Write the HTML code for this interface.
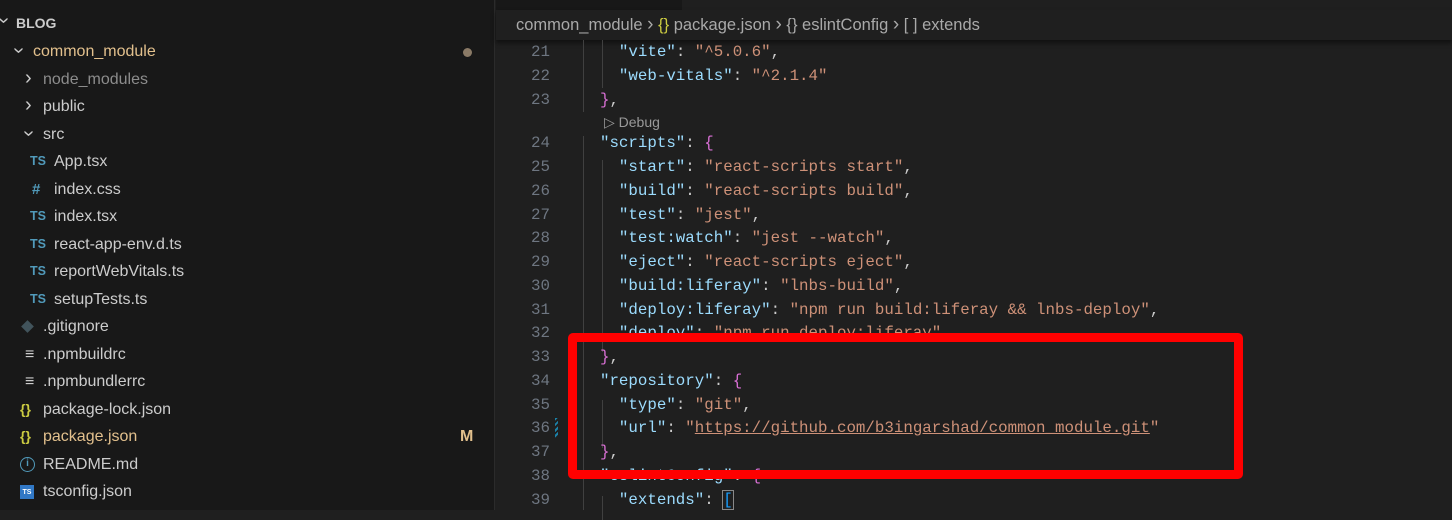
<!DOCTYPE html>
<html><head><meta charset="utf-8"><style>
*{margin:0;padding:0;box-sizing:border-box}
body{width:1452px;height:510px;background:#1f1f1f;overflow:hidden;position:relative;font-family:"Liberation Sans",sans-serif}
#side{position:absolute;left:0;top:0;width:495px;height:510px;background:#181818;border-right:1px solid #2b2b2b}
.r{position:absolute;left:0;height:27px;line-height:27px;font-size:16px;color:#cccccc;white-space:nowrap}
.r span{position:absolute}
.ch{font-size:20px;color:#ccc}
.ic{font-size:12.5px;font-weight:bold;color:#519aba}
#tabs{position:absolute;left:496px;top:0;width:956px;height:10px;background:#181818}
#tabs div{position:absolute;left:186px;top:0;right:0;height:10px;background:#1f1f1f}
#bc{position:absolute;left:496px;top:10px;width:956px;height:30px;line-height:30px;font-size:16.5px;color:#a9a9a9;padding-left:20px;box-shadow:0 3px 4px #111;white-space:pre}
#code{position:absolute;left:496px;top:40px;right:0;bottom:0;font-family:"Liberation Mono",monospace;font-size:15.8px}
.l{position:absolute;left:0;height:24px;line-height:24px;white-space:pre;color:#cccccc}
.n{position:absolute;width:54px;text-align:right;color:#6e7681}
.t{position:absolute;left:85px}
.k{color:#9cdcfe}.s{color:#ce9178}.p{color:#da70d6}.b{color:#179fff}
.g{position:absolute;width:1px;background:#404040}
</style></head><body>
<div id="side">
<div class="r" style="top:10px;font-weight:bold;font-size:14px"><span class="ch" style="left:0;top:-3px;font-weight:normal;transform:rotate(90deg)">&#8250;</span><span style="left:16px">BLOG</span></div>
<div class="r" style="top:38px;color:#e2c08d"><span class="ch" style="left:15px;top:-1px;transform:rotate(90deg)">&#8250;</span><span style="left:33px">common_module</span><span style="left:463px;top:10px;width:9px;height:9px;border-radius:50%;background:#8a7a66"></span></div>
<div class="r" style="top:66px;color:#8c8c8c"><span class="ch" style="left:25px;top:-1px">&#8250;</span><span style="left:43px">node_modules</span></div>
<div class="r" style="top:93px"><span class="ch" style="left:25px;top:-1px">&#8250;</span><span style="left:43px">public</span></div>
<div class="r" style="top:121px"><span class="ch" style="left:25px;top:-1px;transform:rotate(90deg)">&#8250;</span><span style="left:43px">src</span></div>
<div class="r" style="top:148px"><span class="ic" style="left:30px">TS</span><span style="left:54px">App.tsx</span></div>
<div class="r" style="top:176px"><span class="ic" style="left:32px;font-size:15px">#</span><span style="left:54px">index.css</span></div>
<div class="r" style="top:203px"><span class="ic" style="left:30px">TS</span><span style="left:54px">index.tsx</span></div>
<div class="r" style="top:231px"><span class="ic" style="left:30px">TS</span><span style="left:54px">react-app-env.d.ts</span></div>
<div class="r" style="top:258px"><span class="ic" style="left:30px">TS</span><span style="left:54px">reportWebVitals.ts</span></div>
<div class="r" style="top:286px"><span class="ic" style="left:30px">TS</span><span style="left:54px">setupTests.ts</span></div>
<div class="r" style="top:313px"><span style="left:23px;top:9px;width:9px;height:9px;background:#41535b;transform:rotate(45deg)"></span><span style="left:43px">.gitignore</span></div>
<div class="r" style="top:341px"><span style="left:25px;color:#ccc">&#8801;</span><span style="left:43px">.npmbuildrc</span></div>
<div class="r" style="top:368px"><span style="left:25px;color:#ccc">&#8801;</span><span style="left:43px">.npmbundlerrc</span></div>
<div class="r" style="top:396px"><span style="left:20px;color:#cbcb41;font-weight:bold;font-size:14px">{}</span><span style="left:43px">package-lock.json</span></div>
<div class="r" style="top:423px;color:#e2c08d"><span style="left:20px;color:#cbcb41;font-weight:bold;font-size:14px">{}</span><span style="left:43px">package.json</span><span style="left:460px;font-weight:bold">M</span></div>
<div class="r" style="top:451px"><span style="left:20px;top:6px;width:15px;height:15px;border:1.5px solid #519aba;border-radius:50%;color:#519aba;font-size:10px;line-height:12px;text-align:center;font-weight:bold">i</span><span style="left:43px">README.md</span></div>
<div class="r" style="top:478px"><span style="left:20px;top:7px;width:14px;height:14px;background:#3178c6;color:#fff;font-size:7px;line-height:16px;text-align:center;font-weight:bold">TS</span><span style="left:43px">tsconfig.json</span></div>
</div>
<div id="tabs"><div></div></div>
<div id="bc">common_module <span style="font-size:19px">&#8250;</span> <span style="color:#cbcb41">{}</span> package.json <span style="font-size:19px">&#8250;</span> {} eslintConfig <span style="font-size:19px">&#8250;</span> [ ] extends</div>
<div id="code">
<div class="g" style="left:87px;top:0;height:72px"></div>
<div class="g" style="left:87px;top:96px;height:374px"></div>
<div class="g" style="left:106px;top:0;height:48px"></div>
<div class="g" style="left:106px;top:120px;height:192px"></div>
<div class="g" style="left:106px;top:360px;height:48px"></div>
<div class="g" style="left:106px;top:456px;height:24px"></div>
<div class="l" style="top:0"><span class="n">21</span><span class="t">    <span class="k">"vite"</span>: <span class="s">"^5.0.6"</span>,</span></div>
<div class="l" style="top:24px"><span class="n">22</span><span class="t">    <span class="k">"web-vitals"</span>: <span class="s">"^2.1.4"</span></span></div>
<div class="l" style="top:48px"><span class="n">23</span><span class="t">  <span class="p">}</span>,</span></div>
<div class="l" style="top:70px;font-family:'Liberation Sans',sans-serif;font-size:14px;color:#999"><span style="position:absolute;left:108px">&#9655; Debug</span></div>
<div class="l" style="top:91px"><span class="n">24</span><span class="t">  <span class="k">"scripts"</span>: <span class="p">{</span></span></div>
<div class="l" style="top:115px"><span class="n">25</span><span class="t">    <span class="k">"start"</span>: <span class="s">"react-scripts start"</span>,</span></div>
<div class="l" style="top:139px"><span class="n">26</span><span class="t">    <span class="k">"build"</span>: <span class="s">"react-scripts build"</span>,</span></div>
<div class="l" style="top:163px"><span class="n">27</span><span class="t">    <span class="k">"test"</span>: <span class="s">"jest"</span>,</span></div>
<div class="l" style="top:186px"><span class="n">28</span><span class="t">    <span class="k">"test:watch"</span>: <span class="s">"jest --watch"</span>,</span></div>
<div class="l" style="top:210px"><span class="n">29</span><span class="t">    <span class="k">"eject"</span>: <span class="s">"react-scripts eject"</span>,</span></div>
<div class="l" style="top:234px"><span class="n">30</span><span class="t">    <span class="k">"build:liferay"</span>: <span class="s">"lnbs-build"</span>,</span></div>
<div class="l" style="top:258px"><span class="n">31</span><span class="t">    <span class="k">"deploy:liferay"</span>: <span class="s">"npm run build:liferay &amp;&amp; lnbs-deploy"</span>,</span></div>
<div class="l" style="top:281px"><span class="n">32</span><span class="t">    <span class="k">"deploy"</span>: <span class="s">"npm run deploy:liferay"</span></span></div>
<div class="l" style="top:305px"><span class="n">33</span><span class="t">  <span class="p">}</span>,</span></div>
<div class="l" style="top:329px"><span class="n">34</span><span class="t">  <span class="k">"repository"</span>: <span class="p">{</span></span></div>
<div class="l" style="top:353px"><span class="n">35</span><span class="t">    <span class="k">"type"</span>: <span class="s">"git"</span>,</span></div>
<div class="l" style="top:376px"><span class="n">36</span><span class="t">    <span class="k">"url"</span>: <span class="s">"<u>https://github.com/b3ingarshad/common_module.git</u>"</span></span></div>
<div style="position:absolute;left:59px;top:378px;width:3px;height:20px;background:repeating-linear-gradient(135deg,#1b81a8 0 2px,transparent 2px 4px)"></div>
<div class="l" style="top:400px"><span class="n">37</span><span class="t">  <span class="p">}</span>,</span></div>
<div class="l" style="top:424px"><span class="n">38</span><span class="t">  <span class="k">"eslintConfig"</span>: <span class="p">{</span></span></div>
<div class="l" style="top:448px"><span class="n">39</span><span class="t">    <span class="k">"extends"</span>: <span class="b" style="outline:1px solid #888">[</span></span></div>
</div>
<div style="position:absolute;left:568px;top:333px;width:675px;height:146px;border:9px solid #ff0000;border-radius:5px"></div>
</body></html>
